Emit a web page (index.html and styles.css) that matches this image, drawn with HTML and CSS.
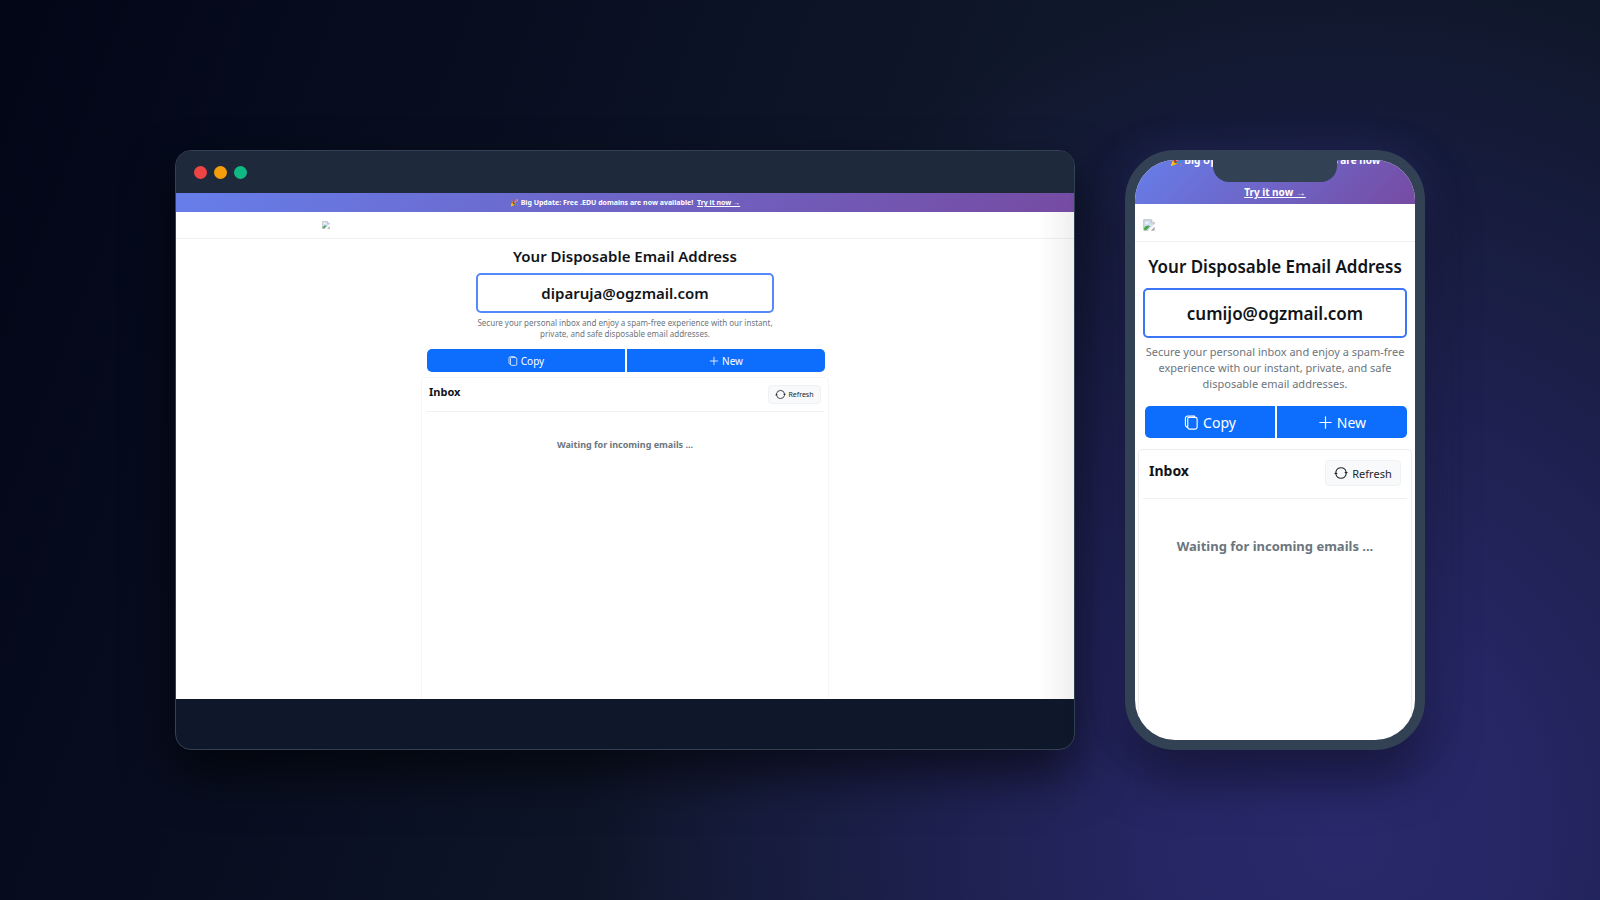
FILE: index.html
```
<!DOCTYPE html>
<html lang="en">
<head>
    <meta charset="UTF-8">
    <meta name="viewport" content="width=device-width, initial-scale=1.0">
    <title>Your Disposable Email Address</title>
    <link rel="stylesheet" href="styles.css">
</head>
<body>
    <svg class="sprite" aria-hidden="true">
        <symbol id="icon-copy" viewBox="0 0 16 16">
            <path d="M5 2.500h7a2 2 0 0 1 2 2v8.500a2 2 0 0 1-2 2H6a2 2 0 0 1-2-2V3.500a1 1 0 0 1 1-1zM4 13a2.500 2.500 0 0 1-2.500-2.500V3.500a2.500 2.500 0 0 1 2.500-2.500h6a2 2 0 0 1 2 1.500" fill="none" stroke="currentColor" stroke-width="1.2"/>
        </symbol>
        <symbol id="icon-plus" viewBox="0 0 16 16">
            <path d="M8 2v12M2 8h12" fill="none" stroke="currentColor" stroke-width="1.3" stroke-linecap="round"/>
        </symbol>
        <symbol id="icon-refresh" viewBox="0 0 16 16">
            <path d="M2.100 7a6 6 0 0 1 11.800 0M13.900 9a6 6 0 0 1-11.800 0" fill="none" stroke="currentColor" stroke-width="1.2"/>
            <path d="M11.800 6.800h4.100L13.800 9.300zM.1 9.200h4.100L2.200 6.700z" fill="currentColor"/>
        </symbol>
        <symbol id="icon-image" viewBox="0 0 16 16">
            <path d="M1 1h10l4 4v10H1z" fill="#d3e0f5" stroke="#a9a9a9"/>
            <path d="M11 1v4h4" fill="#fff" stroke="#a9a9a9"/>
            <path d="M3 6a2 2 0 0 1 4 0z" fill="#fff"/>
            <path d="M1.500 14.500V12c2-3 5-4 8-2.500l-5 5z" fill="#4ca64c"/>
            <path d="M6 16l10-10v4l-6 6z" fill="#fff"/>
            <path d="M11 15h4v-4z" fill="#a9a9a9"/>
        </symbol>
    </svg>

    <main class="showcase">
        <section class="desktop" aria-label="Desktop preview">
            <div class="window-bar">
                <span class="dot red"></span>
                <span class="dot yellow"></span>
                <span class="dot green"></span>
            </div>
            <div class="screen">
                <div class="banner">
                    <span>🎉 Big Update: Free .EDU domains are now available!</span>
                    <a href="#">Try it now →</a>
                </div>
                <header class="navbar">
                    <a href="#" aria-label="Home"><svg class="logo"><use href="#icon-image"/></svg></a>
                </header>
                <div class="content">
                    <h1>Your Disposable Email Address</h1>
                    <input class="address" type="text" value="diparuja@ogzmail.com" aria-label="Email address" readonly>
                    <p class="lead">Secure your personal inbox and enjoy a spam-free experience with our instant, private, and safe disposable email addresses.</p>
                    <div class="actions">
                        <button type="button"><svg><use href="#icon-copy"/></svg>Copy</button>
                        <button type="button"><svg><use href="#icon-plus"/></svg>New</button>
                    </div>
                    <div class="inbox">
                        <div class="inbox-header">
                            <h2>Inbox</h2>
                            <button type="button" class="refresh"><svg><use href="#icon-refresh"/></svg>Refresh</button>
                        </div>
                        <p class="waiting">Waiting for incoming emails ...</p>
                    </div>
                </div>
            </div>
        </section>

        <section class="phone" aria-label="Mobile preview">
            <div class="notch"></div>
            <div class="screen">
                <div class="banner">
                    <span>🎉 Big Update: Free .EDU domains are now available!</span>
                    <a href="#">Try it now →</a>
                </div>
                <header class="navbar">
                    <a href="#" aria-label="Home"><svg class="logo"><use href="#icon-image"/></svg></a>
                </header>
                <div class="content">
                    <h1>Your Disposable Email Address</h1>
                    <input class="address" type="text" value="cumijo@ogzmail.com" aria-label="Email address" readonly>
                    <p class="lead">Secure your personal inbox and enjoy a spam-free experience with our instant, private, and safe disposable email addresses.</p>
                    <div class="actions">
                        <button type="button"><svg><use href="#icon-copy"/></svg>Copy</button>
                        <button type="button"><svg><use href="#icon-plus"/></svg>New</button>
                    </div>
                    <div class="inbox">
                        <div class="inbox-header">
                            <h2>Inbox</h2>
                            <button type="button" class="refresh"><svg><use href="#icon-refresh"/></svg>Refresh</button>
                        </div>
                        <p class="waiting">Waiting for incoming emails ...</p>
                    </div>
                </div>
            </div>
        </section>
    </main>
</body>
</html>
```
FILE: styles.css
```
* {
    box-sizing: border-box;
}

body {
    margin: 0;
    min-height: 100vh;
    font-family: "Noto Sans", sans-serif;
    color: #111418;
    background:
        radial-gradient(ellipse 48% 96% at 84% 92%, rgba(49, 46, 129, 0.75) 0%, rgba(49, 46, 129, 0.66) 25%, rgba(49, 46, 129, 0.4) 55%, rgba(49, 46, 129, 0) 100%),
        linear-gradient(110deg, #020617 0%, #0f172a 55%, #0f172a 100%);
}

h1, h2, p {
    margin: 0;
}

button, input {
    font-family: inherit;
}

.sprite {
    position: absolute;
    width: 0;
    height: 0;
}

.showcase {
    display: flex;
    justify-content: center;
    align-items: center;
    gap: 50px;
    min-height: 100vh;
    padding: 20px;
}

/* Devices */
.desktop {
    display: flex;
    flex-direction: column;
    width: 100%;
    max-width: 900px;
    height: 600px;
    background: #0f172a;
    border: 1px solid #334155;
    border-radius: 16px;
    overflow: hidden;
    box-shadow: 0 25px 50px rgba(0, 0, 0, 0.6);
}

.window-bar {
    display: flex;
    align-items: center;
    gap: 7px;
    height: 42px;
    padding: 0 18px;
    background: #1e293b;
}

.dot {
    width: 13px;
    height: 13px;
    border-radius: 50%;
}

.red { background: #ef4444; }
.yellow { background: #f59e0b; }
.green { background: #10b981; }

.phone {
    position: relative;
    flex: none;
    width: 300px;
    height: 600px;
    border: 10px solid #334155;
    border-radius: 50px;
    background: #334155;
    box-shadow: 0 25px 50px rgba(0, 0, 0, 0.5), 0 0 40px rgba(99, 102, 241, 0.2);
}

.notch {
    position: absolute;
    z-index: 1;
    top: 0;
    left: 50%;
    width: 124px;
    height: 22px;
    transform: translateX(-50%);
    background: #334155;
    border-radius: 0 0 16px 16px;
}

/* Page inside the devices */
.screen {
    display: flex;
    flex-direction: column;
    overflow: hidden;
    background: #fff;
}

.banner {
    color: #fff;
    font-weight: 700;
    text-align: center;
    background: linear-gradient(135deg, #667eea 0%, #764ba2 100%);
}

.banner a {
    color: #fff;
}

.navbar {
    display: flex;
    align-items: center;
    border-bottom: 1px solid #f0f0f0;
}

.navbar a {
    display: flex;
}

.content {
    display: flex;
    flex: 1;
    flex-direction: column;
    align-items: center;
    text-align: center;
}

h1 {
    font-weight: 600;
}

h2 {
    font-weight: 700;
}

.address {
    color: inherit;
    font-weight: 600;
    text-align: center;
    background: #fff;
    border: 2px solid #3b76f6;
    border-radius: 5px;
}

.lead {
    color: #6c757d;
}

.actions {
    display: flex;
    gap: 2px;
    padding-left: 2px;
}

.actions button {
    display: flex;
    flex: 1;
    align-items: center;
    justify-content: center;
    padding: 0;
    color: #fff;
    background: #0d6efd;
    border: 0;
}

.actions button:first-child {
    border-radius: 5px 0 0 5px;
}

.actions button:last-child {
    border-radius: 0 5px 5px 0;
}

.inbox {
    flex: 1;
    border: 1px solid #ececee;
    border-bottom: 0;
    border-radius: 5px 5px 0 0;
}

.inbox-header {
    display: flex;
    justify-content: space-between;
    border-bottom: 1px solid #f0f0f1;
}

.refresh {
    display: flex;
    align-items: center;
    justify-content: center;
    padding: 0;
    color: #212529;
    background: #f8f9fa;
    border: 1px solid #f0f1f2;
    border-radius: 4px;
}

.waiting {
    color: #6c757d;
    font-weight: 700;
}

/* Desktop sizes */
.desktop .screen {
    position: relative;
    height: 506px;
}

.desktop .screen::after {
    content: "";
    position: absolute;
    top: 19px;
    right: 0;
    bottom: 0;
    width: 36px;
    background: linear-gradient(to right, rgba(0, 0, 0, 0), rgba(0, 0, 0, 0.06));
}

.desktop .banner {
    font-size: 7px;
    line-height: 19px;
}

.desktop .banner a {
    margin-left: 2px;
}

.desktop .navbar {
    height: 27px;
    padding: 0 146px;
}

.desktop .logo {
    width: 8px;
    height: 8px;
}

.desktop h1 {
    margin-top: 6px;
    font-size: 15px;
    line-height: 22px;
}

.desktop .address {
    width: 298px;
    height: 40px;
    margin-top: 6px;
    font-size: 15px;
    border-color: #5588f8;
}

.desktop .lead {
    width: 298px;
    margin-top: 4px;
    font-size: 8px;
    line-height: 11px;
}

.desktop .actions {
    width: 400px;
    margin-top: 10px;
}

.desktop .actions button {
    gap: 3px;
    height: 23px;
    font-size: 10px;
}

.desktop .actions svg {
    width: 10px;
    height: 10px;
}

.desktop .inbox {
    width: 408px;
    margin-top: 5px;
    padding: 0 4px;
    border-color: #f6f6f7;
}

.desktop .inbox-header {
    height: 34px;
    padding: 7px 3px;
}

.desktop h2 {
    font-size: 11px;
    line-height: 14px;
}

.desktop .refresh {
    gap: 2px;
    width: 53px;
    height: 19px;
    font-size: 7px;
}

.desktop .refresh svg {
    width: 11px;
    height: 11px;
}

.desktop .waiting {
    margin-top: 26px;
    font-size: 9px;
    line-height: 14px;
}

/* Phone sizes */
.phone .screen {
    height: 100%;
    border-radius: 40px;
}

.phone .banner {
    height: 44px;
    padding: 0 24px 4px;
    display: flex;
    flex-direction: column;
    justify-content: flex-end;
    flex: none;
    font-size: 10px;
    line-height: 16px;
}

.phone .navbar {
    height: 38px;
    padding: 4px 8px 0;
    flex: none;
}

.phone .logo {
    width: 12px;
    height: 12px;
}

.phone .content {
    padding: 0 3px;
}

.phone h1 {
    margin-top: 13px;
    font-size: 17px;
    line-height: 24px;
}

.phone .address {
    width: 264px;
    height: 50px;
    margin-top: 9px;
    font-size: 17px;
}

.phone .lead {
    width: 264px;
    margin-top: 6px;
    font-size: 11px;
    line-height: 16px;
}

.phone .actions {
    width: 264px;
    margin-top: 14px;
}

.phone .actions button {
    gap: 4px;
    height: 32px;
    font-size: 14px;
}

.phone .actions svg {
    width: 15px;
    height: 15px;
}

.phone .inbox {
    width: 100%;
    margin-top: 11px;
    padding: 0 4px;
}

.phone .inbox-header {
    height: 49px;
    padding: 10px 6px;
}

.phone h2 {
    font-size: 14px;
    line-height: 22px;
}

.phone .refresh {
    gap: 4px;
    width: 76px;
    height: 26px;
    font-size: 11px;
}

.phone .refresh svg {
    width: 14px;
    height: 14px;
}

.phone .waiting {
    margin-top: 38px;
    font-size: 13px;
    line-height: 18px;
}
```
